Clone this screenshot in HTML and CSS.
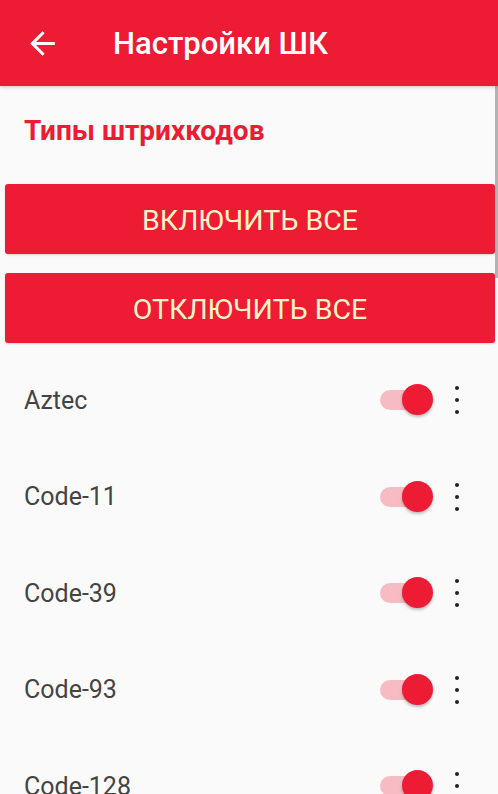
FILE: index.html
```html
<!DOCTYPE html>
<html lang="ru">
<head>
    <meta charset="UTF-8">
    <meta name="viewport" content="width=device-width, initial-scale=1.0">
    <title>Настройки ШК</title>
    <link rel="stylesheet" href="styles.css">
</head>
<body>
    <header class="app-bar">
        <button class="back" type="button" aria-label="Назад">
            <svg width="37" height="37" viewBox="0 0 24 24"><path fill="#fff" d="M20 11H7.83l5.59-5.59L12 4l-8 8 8 8 1.41-1.41L7.83 13H20v-2z"/></svg>
        </button>
        <h1>Настройки ШК</h1>
    </header>

    <main class="content">
        <h2 class="section-title">Типы штрихкодов</h2>
        <button class="action" type="button">Включить все</button>
        <button class="action" type="button">Отключить все</button>

        <ul class="codes">
            <li class="code-row">
                <span class="code-name">Aztec</span>
                <span class="switch on"><span class="track"></span><span class="thumb"></span></span>
                <span class="more"><i></i><i></i><i></i></span>
            </li>
            <li class="code-row">
                <span class="code-name">Code-11</span>
                <span class="switch on"><span class="track"></span><span class="thumb"></span></span>
                <span class="more"><i></i><i></i><i></i></span>
            </li>
            <li class="code-row">
                <span class="code-name">Code-39</span>
                <span class="switch on"><span class="track"></span><span class="thumb"></span></span>
                <span class="more"><i></i><i></i><i></i></span>
            </li>
            <li class="code-row">
                <span class="code-name">Code-93</span>
                <span class="switch on"><span class="track"></span><span class="thumb"></span></span>
                <span class="more"><i></i><i></i><i></i></span>
            </li>
            <li class="code-row">
                <span class="code-name">Code-128</span>
                <span class="switch on"><span class="track"></span><span class="thumb"></span></span>
                <span class="more"><i></i><i></i><i></i></span>
            </li>
        </ul>
    </main>

    <div class="scrollbar"></div>
</body>
</html>
```

FILE: styles.css
```css
body {
    margin: 0;
    padding: 0;
    background: #fafafa;
    font-family: Roboto, "Liberation Sans", sans-serif;
    height: 794px;
    overflow: hidden;
    position: relative;
}

.app-bar {
    background-color: #ed1b33;
    height: 86px;
    display: flex;
    align-items: center;
    box-shadow: 0 1px 4px rgba(0, 0, 0, 0.2);
    position: relative;
    z-index: 1;
}

.back {
    background: none;
    border: none;
    padding: 0;
    margin-left: 24px;
    width: 37px;
    height: 37px;
    display: flex;
}

.app-bar h1 {
    color: #fff;
    font-size: 31px;
    font-weight: 500;
    margin: 0 0 0 52px;
}

.section-title {
    color: #ed1b33;
    font-size: 28px;
    font-weight: 700;
    margin: 0;
    padding: 28px 0 0 24px;
    height: 70px;
}

.action {
    display: block;
    width: 490px;
    height: 70px;
    margin: 0 3px 19px 5px;
    padding-top: 4px;
    background-color: #ed1b33;
    color: #fff4c6;
    border: none;
    border-radius: 3px;
    box-shadow: 0 1px 2px rgba(0, 0, 0, 0.15);
    font-family: Roboto, "Liberation Sans", sans-serif;
    font-size: 28.5px;
    text-transform: uppercase;
}

.codes {
    list-style: none;
    margin: 0;
    padding: 0;
    margin-top: -10px;
}

.code-row {
    display: flex;
    align-items: center;
    height: 96.5px;
    padding: 0 21px 0 24px;
}

.code-name {
    flex: 1;
    color: #444;
    font-size: 25px;
}

.switch {
    position: relative;
    width: 53px;
    height: 32px;
}

.switch .track {
    position: absolute;
    left: 0;
    top: 6px;
    width: 46px;
    height: 20px;
    border-radius: 10px;
    background: #f7bcc3;
}

.switch .thumb {
    position: absolute;
    right: 0;
    top: 0;
    width: 31px;
    height: 31px;
    border-radius: 50%;
    background: #ed1b33;
    box-shadow: 0 2px 3px rgba(0, 0, 0, 0.25);
}

.more {
    width: 40px;
    margin-left: 4px;
    display: flex;
    flex-direction: column;
    align-items: center;
    gap: 8px;
}

.more i {
    width: 4px;
    height: 4px;
    border-radius: 50%;
    background: #222;
}

.scrollbar {
    position: absolute;
    top: 86px;
    right: 0;
    width: 3px;
    height: 192px;
    background: #b3b3b3;
}
```
